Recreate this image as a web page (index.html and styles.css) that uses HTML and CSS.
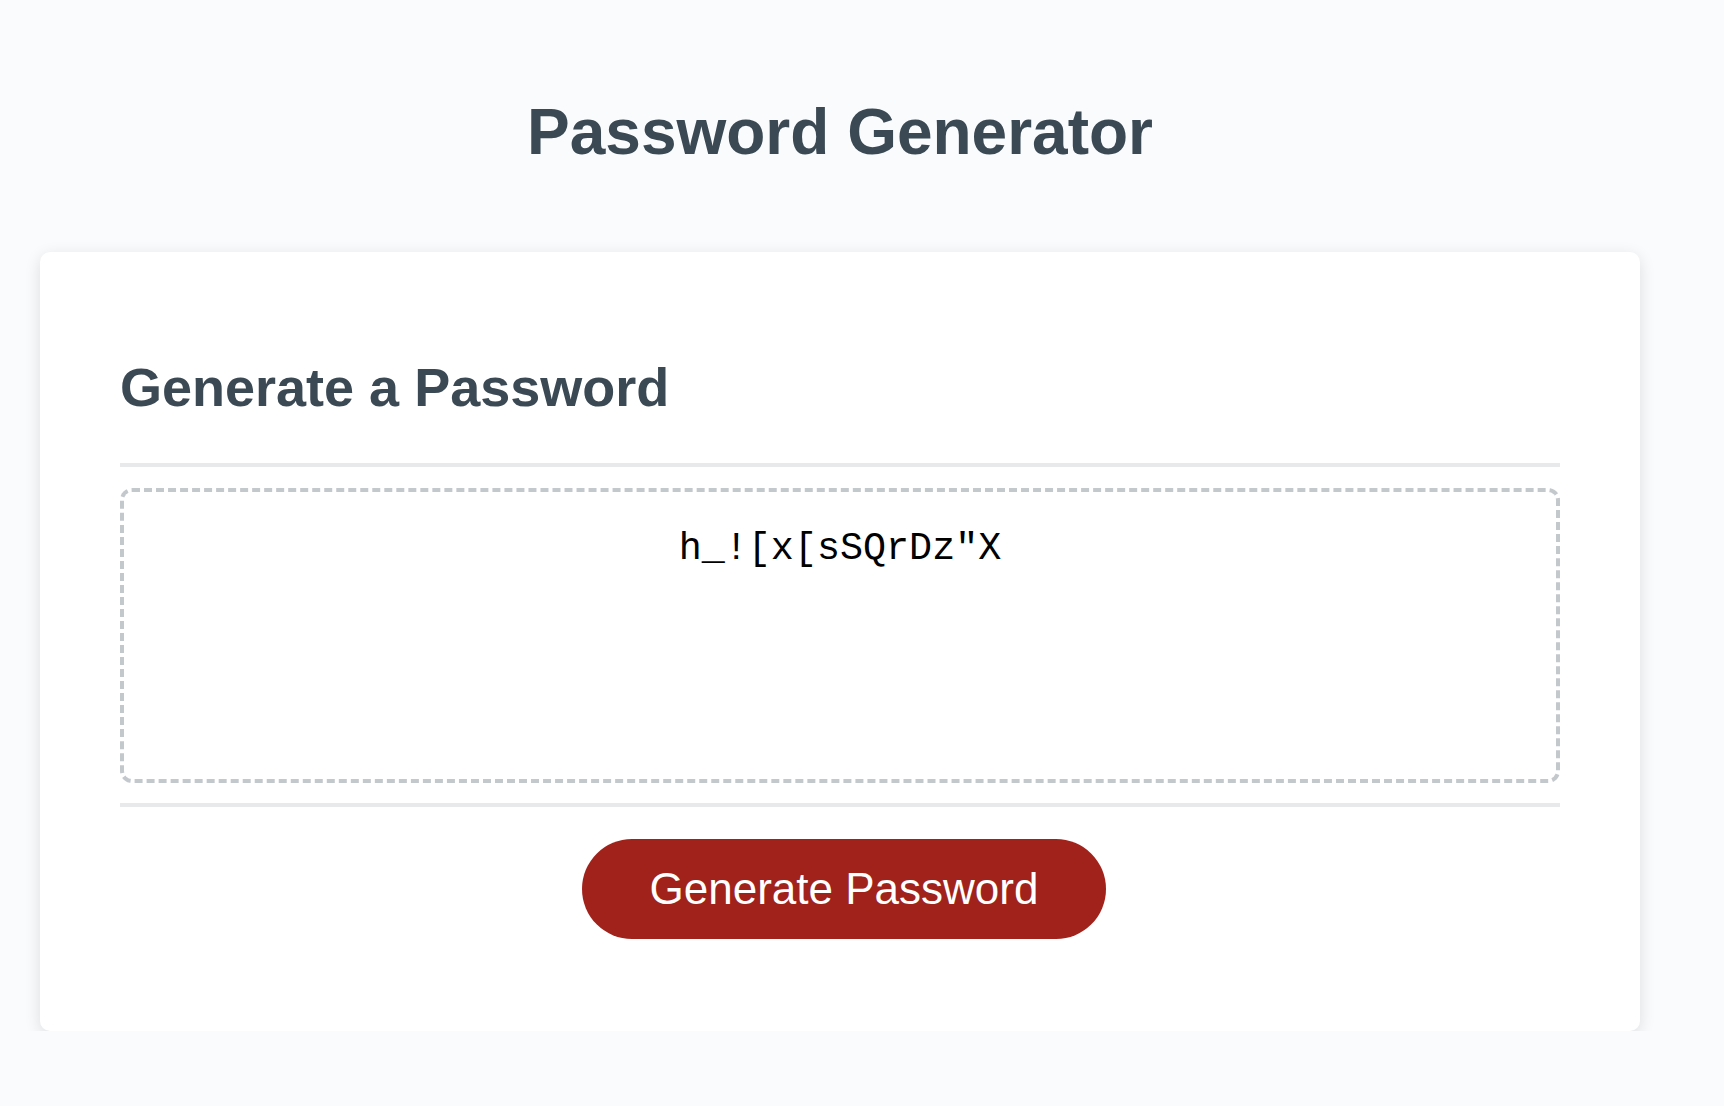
FILE: index.html
```html
<!DOCTYPE html>
<html lang="en">
<head>
  <meta charset="UTF-8">
  <title>Password Generator</title>
  <link rel="stylesheet" href="styles.css">
</head>
<body>
  <div class="wrapper">
    <header>
      <h1>Password Generator</h1>
    </header>
    <div class="card">
      <div class="card-header">
        <h2>Generate a Password</h2>
      </div>
      <div class="card-body">
        <textarea readonly id="password" placeholder="Your Secure Password" aria-label="Generated Password">h_![x[sSQrDz"X</textarea>
      </div>
      <div class="card-footer">
        <button id="generate" class="btn">Generate Password</button>
      </div>
    </div>
  </div>
</body>
</html>
```

FILE: styles.css
```css
* {
  box-sizing: border-box;
}
body {
  margin: 0;
  font-family: 'Liberation Sans', Arial, sans-serif;
  background-color: #f9fbfd;
}
.wrapper {
  width: 1680px;
  padding: 60px 40px 0;
}
header {
  text-align: center;
  padding: 0 40px 40px;
  color: hsl(206, 17%, 28%);
}
h1 {
  margin: 39px 0 47px;
  font-size: 64px;
  line-height: 66px;
}
.card {
  background-color: #fff;
  border-radius: 10px;
  box-shadow: rgba(0, 0, 0, 0.12) 0 4px 16px 0;
  color: hsl(206, 17%, 28%);
  font-size: 36px;
  width: 1600px;
  padding: 60px 80px 60px;
}
h2 {
  margin: 45px 0;
  font-size: 54px;
  line-height: 61px;
}
.card-header::after,
.card-footer::before {
  content: " ";
  display: block;
  width: 100%;
  background: #e7e9eb;
  height: 4px;
}
.card-footer {
  text-align: center;
}
#password {
  appearance: none;
  display: block;
  width: 100%;
  height: 295px;
  padding: 35px 30px 165px;
  margin: 21px 0 20px;
  font-family: 'Liberation Mono', 'Courier New', monospace;
  font-size: 38.4px;
  color: #000;
  text-align: center;
  border: 4px dashed #c3c8cd;
  border-radius: 12px;
  resize: none;
  overflow: hidden;
  outline: none;
}
.btn {
  border: none;
  background-color: #a0221b;
  border-radius: 50px;
  color: #fff;
  display: inline-block;
  font-family: 'Liberation Sans', Arial, sans-serif;
  font-size: 44px;
  line-height: 44px;
  margin: 32px 32px 32px 40px;
  padding: 28px 68px;
  cursor: pointer;
}
```
